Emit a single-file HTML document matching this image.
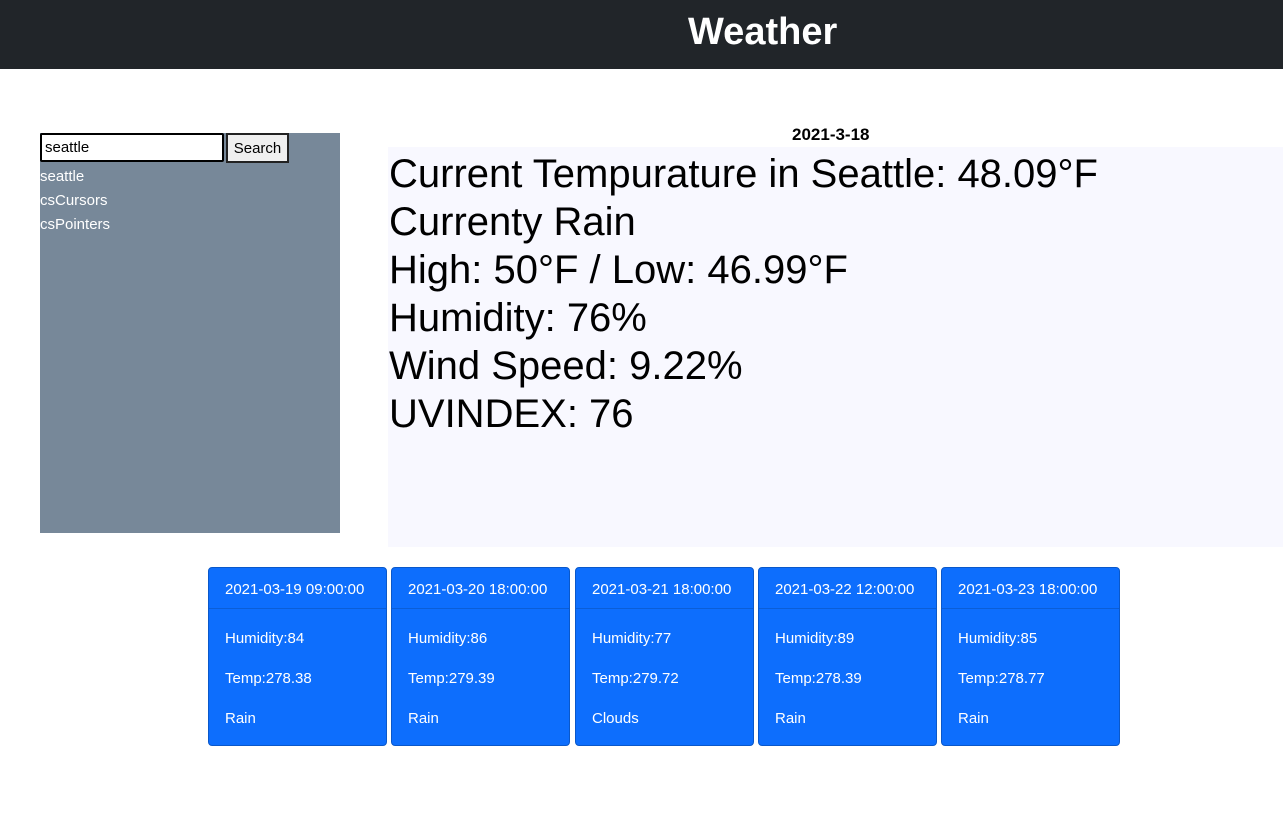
<!DOCTYPE html>
<html><head><style>
body{margin:0;width:1283px;height:813px;font-family:"Liberation Sans",sans-serif;background:#fff;position:relative;overflow:hidden}
.nav{height:69px;background:#212529;color:#fff;text-align:center}
.nav h1{margin:0;position:absolute;left:688px;top:11px;font-size:38px;font-weight:bold}
.side{position:absolute;left:40px;top:133px;width:300px;height:400px;background:#778899;color:#fff;font-size:15px}
.side input{position:absolute;left:0;top:0;width:174px;height:25px;border:2px solid #000;border-radius:2px;padding:0 3px;font-size:15px;font-family:inherit}
.side button{position:absolute;left:186px;top:0;width:63px;height:30px;background:#efefef;border:2px solid #222;font-size:15px;font-family:inherit;padding:0}
.side div{position:absolute;left:0;line-height:24px}
.date{position:absolute;left:792px;top:125px;font-weight:bold;font-size:17px}
.main{position:absolute;left:388px;top:147px;width:895px;height:400px;background:#f8f8ff}
.main p{margin:0;font-size:40px;line-height:48px;padding-left:1px;padding-top:0;color:#000;position:relative;top:3px}
.card{position:absolute;top:567px;width:177px;height:177px;background:#0d6efd;border:1px solid #0a58ca;border-radius:4px;color:#fff;font-size:15px}
.card .h{height:40px;line-height:43px;padding-left:16px;border-bottom:1px solid #0b5ed7}
.card .l{position:absolute;left:16px}
</style></head><body>
<div class="nav"><h1>Weather</h1></div>
<div class="side">
<input value="seattle"><button>Search</button>
<div style="top:32px">seattle</div><div style="top:56px">csCursors</div><div style="top:80px">csPointers</div>
</div>
<div class="date">2021-3-18</div>
<div class="main">
<p>Current Tempurature in Seattle: 48.09°F</p>
<p>Currenty Rain</p>
<p>High: 50°F / Low: 46.99°F</p>
<p>Humidity: 76%</p>
<p>Wind Speed: 9.22%</p>
<p>UVINDEX: 76</p>
</div>
<div class="card" style="left:208px"><div class="h">2021-03-19 09:00:00</div><div class="l" style="top:62px">Humidity:84</div><div class="l" style="top:102px">Temp:278.38</div><div class="l" style="top:142px">Rain</div></div>
<div class="card" style="left:391px"><div class="h">2021-03-20 18:00:00</div><div class="l" style="top:62px">Humidity:86</div><div class="l" style="top:102px">Temp:279.39</div><div class="l" style="top:142px">Rain</div></div>
<div class="card" style="left:575px"><div class="h">2021-03-21 18:00:00</div><div class="l" style="top:62px">Humidity:77</div><div class="l" style="top:102px">Temp:279.72</div><div class="l" style="top:142px">Clouds</div></div>
<div class="card" style="left:758px"><div class="h">2021-03-22 12:00:00</div><div class="l" style="top:62px">Humidity:89</div><div class="l" style="top:102px">Temp:278.39</div><div class="l" style="top:142px">Rain</div></div>
<div class="card" style="left:941px"><div class="h">2021-03-23 18:00:00</div><div class="l" style="top:62px">Humidity:85</div><div class="l" style="top:102px">Temp:278.77</div><div class="l" style="top:142px">Rain</div></div>
</body></html>
